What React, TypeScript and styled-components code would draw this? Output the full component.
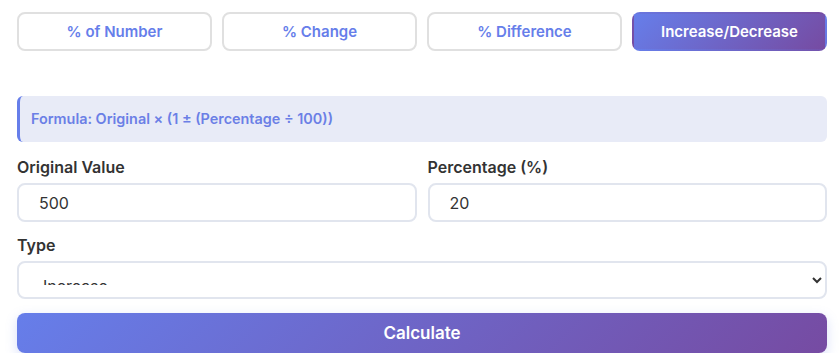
import styled, { createGlobalStyle } from 'styled-components';

const GRADIENT = 'linear-gradient(135deg, #667eea 0%, #764ba2 100%)';

export default function App() {
  const tabs = ['% of Number', '% Change', '% Difference', 'Increase/Decrease'];
  return (
    <>
      <GlobalStyle />
      <Page>
        <Tabs>
          {tabs.map((t, i) => (
            <Tab key={t} active={i === 3}>
              {t}
            </Tab>
          ))}
        </Tabs>
        <Formula>Formula: Original × (1 ± (Percentage ÷ 100))</Formula>
        <Row>
          <Field>
            <Label>Original Value</Label>
            <Input defaultValue="500" />
          </Field>
          <Field>
            <Label>Percentage (%)</Label>
            <Input defaultValue="20" />
          </Field>
        </Row>
        <Field>
          <Label>Type</Label>
          <Select defaultValue="increase">
            <option value="increase">Increase</option>
            <option value="decrease">Decrease</option>
          </Select>
        </Field>
        <CalcButton>Calculate</CalcButton>
      </Page>
    </>
  );
}

//styles

const GlobalStyle = createGlobalStyle`
  body {
    margin: 0;
    background: #fff;
    font-family: Inter, 'Open Sans', sans-serif;
  }
`;

const Page = styled.div`
  padding: 12px 12px 0 17px;
  display: flex;
  flex-direction: column;
`;

const Tabs = styled.div`
  display: grid;
  grid-template-columns: repeat(4, 1fr);
  gap: 10px;
`;

const Tab = styled.button<{ active?: boolean }>`
  height: 39px;
  border-radius: 8px;
  border: 2px solid ${(p) => (p.active ? 'transparent' : '#e0e0e0')};
  background: ${(p) => (p.active ? GRADIENT : '#fff')};
  color: ${(p) => (p.active ? '#fff' : '#667eea')};
  font-family: Inter, sans-serif;
  font-size: 15px;
  font-weight: 600;
  cursor: pointer;
`;

const Formula = styled.div`
  margin-top: 45px;
  height: 46px;
  box-sizing: border-box;
  display: flex;
  align-items: center;
  padding: 0 0 2px 11px;
  background: #e8ebf7;
  border-left: 3px solid #667eea;
  border-radius: 6px;
  color: #6b7fe6;
  font-size: 14.4px;
  font-weight: 600;
`;

const Row = styled.div`
  display: grid;
  grid-template-columns: 1fr 1fr;
  gap: 11px;
  margin-top: 14px;
`;

const Field = styled.div`
  display: flex;
  flex-direction: column;
`;

const Label = styled.label`
  font-size: 16px;
  font-weight: 600;
  color: #333;
  line-height: 22px;
  margin-bottom: 5px;
`;

const Input = styled.input`
  height: 39px;
  box-sizing: border-box;
  border: 2px solid #e1e5ee;
  border-radius: 8px;
  padding: 0 20px;
  font-family: Inter, sans-serif;
  font-size: 16px;
  color: #333;
  margin-bottom: 12px;
  outline: none;
`;

const Select = styled.select`
  height: 38px;
  box-sizing: border-box;
  border: 2px solid #e1e5ee;
  border-radius: 8px;
  padding: 12px 20px;
  font-family: Inter, sans-serif;
  font-size: 16px;
  color: #333;
  background: #fff;
  outline: none;
`;

const CalcButton = styled.button`
  margin-top: 14px;
  height: 40px;
  border: none;
  border-radius: 8px;
  background: ${GRADIENT};
  color: #fff;
  font-family: Inter, sans-serif;
  font-size: 17px;
  font-weight: 600;
  box-shadow: 0 4px 12px rgba(102, 126, 234, 0.25);
`;
